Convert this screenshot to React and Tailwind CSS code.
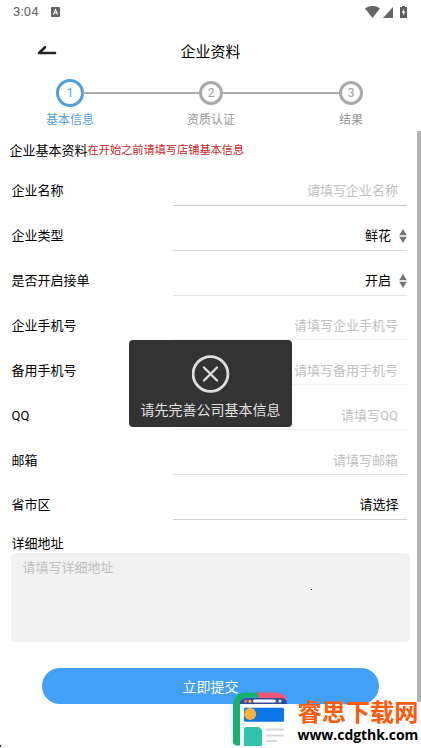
import React, { useState } from "react";

const fields = [
  { label: "企业名称", placeholder: "请填写企业名称", line: "border-[#c6c6c6]" },
  { label: "企业类型", value: "鲜花", type: "select", line: "border-[#dadada]" },
  { label: "是否开启接单", value: "开启", type: "select", line: "border-[#e2e2e2]" },
  { label: "企业手机号", placeholder: "请填写企业手机号", line: "border-[#f0f0f0]" },
  { label: "备用手机号", placeholder: "请填写备用手机号", line: "border-[#f4f4f4]" },
  { label: "QQ", placeholder: "请填写QQ", line: "border-[#f1f1f1]" },
  { label: "邮箱", placeholder: "请填写邮箱", line: "border-[#dcdcdc]" },
  { label: "省市区", value: "请选择", type: "picker", line: "border-[#d2d2d2]" },
];

const StatusBar = () => (
  <div className="flex h-6 items-center justify-between pl-[13px] pr-[14px]">
    <div className="flex items-center gap-[12px]">
      <span className="font-['Roboto',sans-serif] text-[13px] leading-6 tracking-[0.2px] text-[#666]">
        3:04
      </span>
      <svg width="9" height="10" viewBox="0 0 9 10">
        <rect width="9" height="10" rx="1" fill="#666" />
        <path d="M2.4 7.6 4.5 2.6 6.6 7.6M3.2 6h2.6" fill="none" stroke="#fff" strokeWidth="1.1" />
      </svg>
    </div>
    <div className="flex items-center pb-[1px]">
      <svg width="15" height="12" viewBox="0 0 15 12">
        <path d="M0 2.6C4-.9 11-.9 15 2.6L7.5 12Z" fill="#666" />
      </svg>
      <svg className="ml-[3px] mt-px" width="10" height="11" viewBox="0 0 10 11">
        <path d="M10 0v11H0Z" fill="#666" />
      </svg>
      <svg className="ml-[7px]" width="7" height="12" viewBox="0 0 7 12">
        <path d="M2 0h3v1h2v11H0V1h2Z" fill="#5c5c5c" />
        <path d="M4 2.6 1.7 6.8h1.4v3l2.3-4.3H4Z" fill="#fff" />
      </svg>
    </div>
  </div>
);

const Step = ({ number, label, active }) => (
  <div className="flex w-[60px] shrink-0 flex-col items-center">
    <div className="flex h-7 items-center">
      <div
        className={`flex items-center justify-center rounded-full bg-white font-['Roboto',sans-serif] text-[12px] ${
          active
            ? "h-7 w-7 border-[3px] border-[#539fdc] text-[#539fdc]"
            : "h-6 w-6 border-[3px] border-[#a9a9a9] text-[#a0a0a0]"
        }`}
      >
        {number}
      </div>
    </div>
    <span
      className={`mt-[4px] text-[12px] leading-[18px] ${
        active ? "text-[#539fdc]" : "text-[#969696]"
      }`}
    >
      {label}
    </span>
  </div>
);

const SelectArrows = () => (
  <svg className="ml-[8px]" width="8" height="14" viewBox="0 0 8 14">
    <path d="M4 0 7.8 6.2H.2ZM4 14 7.8 7.8H.2Z" fill="#747474" />
  </svg>
);

const Field = ({ field }) => (
  <div className="flex h-[44.86px] shrink-0 items-end pl-[11.5px] pr-[10px]">
    <span className="w-[161.5px] pb-[4.4px] text-[13px] leading-5 text-black">
      {field.label}
    </span>
    <div className={`flex flex-1 items-center justify-end border-b pb-[3.4px] text-[13px] leading-5 ${field.line}`}>
      {field.value ? (
        <span className={`text-black ${field.type === "picker" ? "pr-[8.5px]" : ""}`}>
          {field.value}
        </span>
      ) : (
        <span className="pr-[9px] text-[#c0c0c0]">{field.placeholder}</span>
      )}
      {field.type === "select" && <SelectArrows />}
    </div>
  </div>
);

const Toast = () => (
  <div className="absolute left-[129px] top-[340px] flex h-[87px] w-[163px] flex-col items-center rounded-[4px] bg-[#333]">
    <svg className="mt-[15px]" width="38" height="38" viewBox="0 0 38 38" fill="none" stroke="#dedede">
      <circle cx="18.5" cy="19" r="17.4" strokeWidth="2.8" />
      <path d="m12 12.5 13 13m0-13-13 13" strokeWidth="2.3" strokeLinecap="round" />
    </svg>
    <span className="mt-[7px] whitespace-nowrap text-[14px] leading-5 text-[#e0e0e0]">
      请先完善公司基本信息
    </span>
  </div>
);

const Watermark = () => (
  <div className="absolute left-[232px] top-[692px] flex h-[56px] w-[189px]">
    <svg className="shrink-0" width="57" height="56" viewBox="0 0 57 56">
      <path d="M8 12v44h47V12Z" fill="#fff" />
      <path d="M1 50V14C1 5 6 .6 15 .6h13l-2 5H15c-4 0-7 3-7 8v40C4 53.5 1 53 1 50Z" fill="#12b36b" />
      <path d="M25 .6h18c7 0 11 3 12 7H28Z" fill="#f2577b" />
      <path d="M8 12c0-4 3-6 7-6h33c5 0 7 2 7 6Z" fill="#34499a" />
      <circle cx="13.7" cy="9.2" r="1.6" fill="#f36c7b" />
      <circle cx="18" cy="9.2" r="1.6" fill="#f7b846" />
      <rect x="21" y="7.6" width="23" height="3" rx="1.5" fill="#fff" />
      <circle cx="48" cy="9" r="1.6" fill="#e7edff" />
      <rect x="12" y="15.7" width="40" height="14" rx="1.5" fill="#0b75e6" />
      <circle cx="18.2" cy="22" r="6" fill="#fbb238" />
      <path d="M14 35h13l3 3v16H12V37c0-1 .8-2 2-2Z" fill="#2ec4b0" />
      <g stroke="#d6d6d6" strokeWidth="2" strokeLinecap="round">
        <path d="M35 37.5h16M35 43.5h16M35 49h9" />
      </g>
    </svg>
    <div className="ml-[8.5px] flex flex-col whitespace-nowrap font-bold">
      <span className="mt-[7px] text-[24.2px] leading-[28px] text-[#ff5a0a]">睿思下载网</span>
      <span className="font-['Open_Sans',sans-serif] text-[14px] leading-[16px] tracking-[-0.05px] text-black">
        www.cdgthk.com
      </span>
    </div>
  </div>
);

const App = () => {
  const [address, setAddress] = useState("");

  return (
    <div className="relative flex h-[748px] w-[421px] flex-col overflow-hidden bg-white font-['Roboto','Noto_Sans_CJK_SC',sans-serif]">
      <StatusBar />

      {/* Title bar */}
      <div className="grid h-[54px] grid-cols-[60px_1fr_60px] items-center">
        <svg className="ml-[37px]" width="20" height="12" viewBox="0 0 20 12">
          <path d="M8 2.2 2 8h16" fill="none" stroke="#262626" strokeWidth="2.6" strokeLinecap="round" strokeLinejoin="round" />
        </svg>
        <h1 className="pt-[2px] text-center text-[15px] leading-6 text-black">企业资料</h1>
      </div>

      {/* Steps */}
      <div className="flex h-[53px] items-start justify-between px-[40px] pt-[1px]">
        <Step number={1} label="基本信息" active />
        <div className="-mx-[17.5px] mt-[13px] h-[2px] flex-1 bg-[#aaa]" />
        <Step number={2} label="资质认证" />
        <div className="-mx-[18px] mt-[13px] h-[2px] flex-1 bg-[#aaa]" />
        <Step number={3} label="结果" />
      </div>

      <div className="flex">
        <div className="flex w-[417px] flex-col">
          <div className="flex h-[30px] items-end pl-[9.5px] leading-5">
            <span className="text-[13px] text-black">企业基本资料</span>
            <span className="text-[11.2px] text-[#c91c1c]">在开始之前请填写店铺基本信息</span>
          </div>
          {fields.map((field) => (
            <Field key={field.label} field={field} />
          ))}
          <label className="mt-[14px] pl-[11.5px] text-[13px] leading-5 text-black">详细地址</label>
          <textarea
            className="-mt-px ml-[11px] block h-[89px] w-[399px] resize-none rounded-[5px] bg-[#f1f1f1] px-[11.5px] py-[5px] text-[13px] leading-5 outline-none placeholder:text-[#c0c0c0]"
            placeholder="请填写详细地址"
            value={address}
            onChange={(e) => setAddress(e.target.value)}
          />
          <button className="ml-[42px] mt-[26px] h-[36px] w-[337px] rounded-full bg-[#42a0f8] pt-[3px] text-[14px] text-white">
            立即提交
          </button>
        </div>
        {/* Scrollbar */}
        <div className="h-[571px] w-[4px] bg-[#b3b3b3]" />
      </div>

      <Toast />
      <Watermark />
      <div className="absolute left-[311px] top-[589px] h-px w-px bg-[#222]" />
      <div className="absolute left-0 top-[745px] h-[2px] w-px bg-[#222]" />
    </div>
  );
};

export default App;
